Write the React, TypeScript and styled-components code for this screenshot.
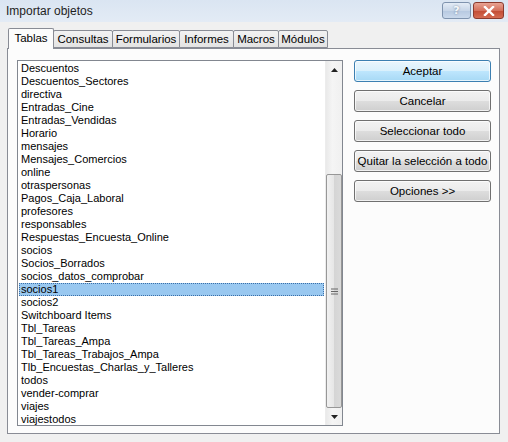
import React, { useState } from 'react';
import styled, { createGlobalStyle } from 'styled-components';

const GlobalStyle = createGlobalStyle`
  html, body {
    margin: 0;
    padding: 0;
    background: #f0f0f0;
  }
  * {
    box-sizing: border-box;
  }
`;

const Window = styled.div`
  width: 508px;
  height: 442px;
  display: flex;
  flex-direction: column;
  background: #f0f0f0;
  font-family: 'Liberation Sans', Arial, sans-serif;
  font-size: 11px;
  color: #000;
  overflow: hidden;
`;

const TitleBar = styled.div`
  height: 23px;
  display: flex;
  align-items: flex-start;
  justify-content: space-between;
  padding: 0 4px 0 6px;
  background: linear-gradient(#dae5f2, #e3ebf5);
`;

const Title = styled.div`
  font-size: 12px;
  line-height: 22px;
  color: #1e1e1e;
`;

const CaptionButtons = styled.div`
  display: flex;
  gap: 2px;
  padding-top: 2px;
`;

const CaptionButton = styled.div<{ $close?: boolean }>`
  width: ${(p) => (p.$close ? 31 : 29)}px;
  height: 17px;
  display: flex;
  align-items: center;
  justify-content: center;
  border: 1px solid ${(p) => (p.$close ? '#8a3a2e' : '#7f93ae')};
  border-radius: 3px;
  background: ${(p) =>
    p.$close
      ? 'linear-gradient(#e8a393, #d4705c 50%, #c24b34 51%, #d46b52)'
      : 'linear-gradient(#e4ecf6, #c8d6e8 50%, #b6c8e0 51%, #cad9ec)'};
  color: #f4f7fb;
  font-family: 'DejaVu Sans', sans-serif;
  font-weight: bold;
  font-size: 11px;
  text-shadow: 0 0 2px rgba(40, 60, 90, 0.6);
`;

const Body = styled.div`
  flex: 1;
  display: flex;
  flex-direction: column;
  padding: 6px 8px 8px 7px;
`;

const TabStrip = styled.div`
  display: flex;
  align-items: flex-end;
  height: 20px;
  padding-left: 1px;
  position: relative;
  z-index: 1;
`;

const Tab = styled.div<{ $active?: boolean; $w: number }>`
  width: ${(p) => p.$w}px;
  height: ${(p) => (p.$active ? 21 : 18)}px;
  margin-bottom: ${(p) => (p.$active ? -1 : 0)}px;
  margin-left: ${(p) => (p.$active ? 0 : -1)}px;
  display: flex;
  align-items: center;
  justify-content: center;
  padding-bottom: ${(p) => (p.$active ? 3 : 0)}px;
  border: 1px solid #898c95;
  border-bottom: ${(p) => (p.$active ? 'none' : '1px solid #898c95')};
  border-radius: 2px 2px 0 0;
  background: ${(p) =>
    p.$active ? '#fcfcfc' : 'linear-gradient(#f2f2f2, #e3e3e3)'};
  font-size: 11.5px;
  white-space: nowrap;
  color: #000;
  &:first-child {
    margin-left: 0;
  }
`;

const Panel = styled.div`
  flex: 1;
  display: flex;
  gap: 11px;
  padding: 11px 8px 7px 9px;
  border: 1px solid #898c95;
  background: #fcfcfc;
`;

const ListBox = styled.div`
  width: 328px;
  height: 366px;
  display: flex;
  border: 1px solid #828790;
  background: #fff;
`;

const Items = styled.div`
  flex: 1;
  padding: 1px 1px 0 1px;
  overflow: hidden;
`;

const Item = styled.div<{ $selected?: boolean }>`
  height: 13px;
  line-height: 13px;
  padding-left: 2px;
  white-space: nowrap;
  background: ${(p) => (p.$selected ? '#99c8f0' : 'transparent')};
  outline: ${(p) => (p.$selected ? '1px dotted #3a6fa8' : 'none')};
  outline-offset: -1px;
`;

const ScrollBar = styled.div`
  width: 17px;
  display: flex;
  flex-direction: column;
  background: linear-gradient(90deg, #e9e9e9, #f5f5f5 40%, #f0f0f0);
  border-left: 1px solid #ececec;
`;

const ArrowButton = styled.div`
  height: 17px;
  display: flex;
  align-items: center;
  justify-content: center;
`;

const Track = styled.div`
  flex: 1;
  display: flex;
  flex-direction: column;
  justify-content: flex-end;
`;

const Thumb = styled.div`
  height: 234px;
  display: flex;
  align-items: center;
  justify-content: center;
  border: 1px solid #979797;
  border-radius: 2px;
  background: linear-gradient(90deg, #f1f1f1, #e6e6e6 50%, #d5d5d5 51%, #dadada);
`;

const Buttons = styled.div`
  display: flex;
  flex-direction: column;
  gap: 8px;
`;

const Button = styled.div<{ $default?: boolean }>`
  width: 137px;
  height: 22px;
  display: flex;
  align-items: center;
  justify-content: center;
  border: 1px solid ${(p) => (p.$default ? '#3c7fb1' : '#707070')};
  border-radius: 3px;
  background: ${(p) =>
    p.$default
      ? 'linear-gradient(#eaf6fd, #d9f0fc 50%, #bee6fd 51%, #a7d9f5)'
      : 'linear-gradient(#f2f2f2, #ebebeb 50%, #dddddd 51%, #cfcfcf)'};
  box-shadow: inset 0 0 0 1px rgba(255, 255, 255, 0.7);
  font-size: 11.5px;
  white-space: nowrap;
  color: #000;
`;

const tabs = [
  { label: 'Tablas', w: 46 },
  { label: 'Consultas', w: 60 },
  { label: 'Formularios', w: 68 },
  { label: 'Informes', w: 55 },
  { label: 'Macros', w: 46 },
  { label: 'Módulos', w: 50 },
];

const tables = [
  'Descuentos',
  'Descuentos_Sectores',
  'directiva',
  'Entradas_Cine',
  'Entradas_Vendidas',
  'Horario',
  'mensajes',
  'Mensajes_Comercios',
  'online',
  'otraspersonas',
  'Pagos_Caja_Laboral',
  'profesores',
  'responsables',
  'Respuestas_Encuesta_Online',
  'socios',
  'Socios_Borrados',
  'socios_datos_comprobar',
  'socios1',
  'socios2',
  'Switchboard Items',
  'Tbl_Tareas',
  'Tbl_Tareas_Ampa',
  'Tbl_Tareas_Trabajos_Ampa',
  'Tlb_Encuestas_Charlas_y_Talleres',
  'todos',
  'vender-comprar',
  'viajes',
  'viajestodos',
];

const actions = [
  'Aceptar',
  'Cancelar',
  'Seleccionar todo',
  'Quitar la selección a todo',
  'Opciones >>',
];

const App = () => {
  const [selected, setSelected] = useState('socios1');

  return (
    <>
      <GlobalStyle />
      <Window>
        <TitleBar>
          <Title>Importar objetos</Title>
          <CaptionButtons>
            <CaptionButton>?</CaptionButton>
            <CaptionButton $close>
              <svg width="12" height="10" viewBox="0 0 12 10">
                <path
                  d="M2 1 L10 9 M10 1 L2 9"
                  stroke="#fff"
                  strokeWidth="2.4"
                  strokeLinecap="square"
                />
              </svg>
            </CaptionButton>
          </CaptionButtons>
        </TitleBar>
        <Body>
          <TabStrip>
            {tabs.map((t, i) => (
              <Tab key={t.label} $w={t.w} $active={i === 0}>
                {t.label}
              </Tab>
            ))}
          </TabStrip>
          <Panel>
            <ListBox>
              <Items>
                {tables.map((name) => (
                  <Item
                    key={name}
                    $selected={name === selected}
                    onClick={() => setSelected(name)}
                  >
                    {name}
                  </Item>
                ))}
              </Items>
              <ScrollBar>
                <ArrowButton>
                  <svg width="7" height="4" viewBox="0 0 7 4">
                    <path d="M0 4 L3.5 0 L7 4 Z" fill="#222" />
                  </svg>
                </ArrowButton>
                <Track>
                  <Thumb>
                    <svg width="7" height="7" viewBox="0 0 7 7">
                      <path d="M0 1h7M0 3.5h7M0 6h7" stroke="#666" strokeWidth="1" />
                    </svg>
                  </Thumb>
                </Track>
                <ArrowButton>
                  <svg width="7" height="4" viewBox="0 0 7 4">
                    <path d="M0 0 L7 0 L3.5 4 Z" fill="#222" />
                  </svg>
                </ArrowButton>
              </ScrollBar>
            </ListBox>
            <Buttons>
              {actions.map((a, i) => (
                <Button key={a} $default={i === 0}>
                  {a}
                </Button>
              ))}
            </Buttons>
          </Panel>
        </Body>
      </Window>
    </>
  );
};

export default App;
